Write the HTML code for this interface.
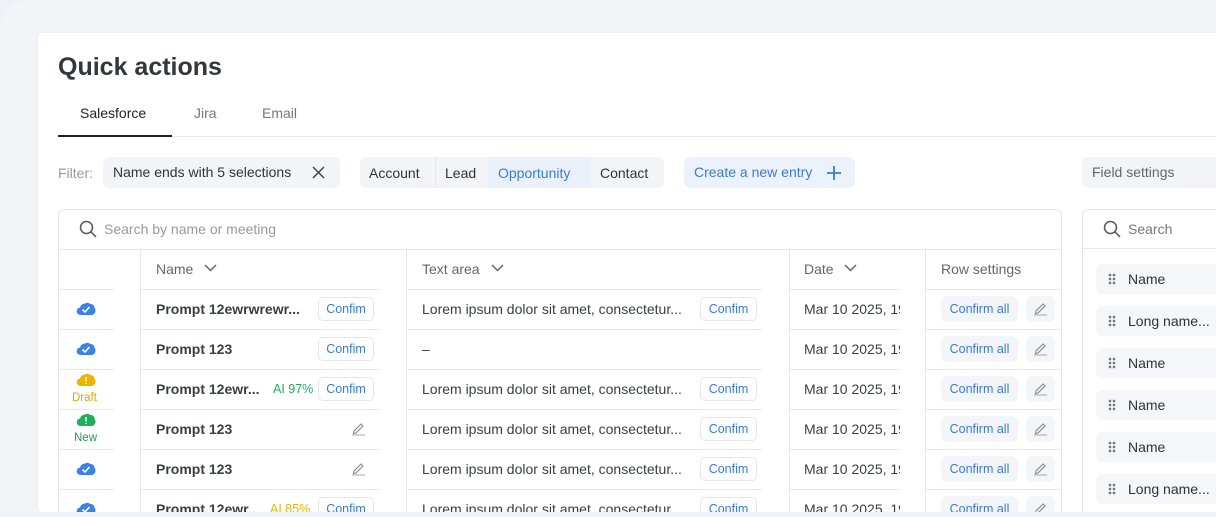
<!DOCTYPE html>
<html><head><meta charset="utf-8"><style>
*{box-sizing:border-box;margin:0;padding:0}
html,body{width:1216px;height:517px;overflow:hidden}
body{background:#eef1f6;font-family:"Liberation Sans",sans-serif;position:relative;color:#2f3237}
#w{position:absolute;left:0;top:0;width:1216px;height:517px;overflow:hidden}
.a{position:absolute}
.panel{left:0;top:0;width:1300px;height:517px;background:#f2f4f8;border-radius:30px 30px 0 0}
.card{left:38px;top:33px;width:1200px;height:479px;background:#fff;border-radius:4px 0 0 4px;box-shadow:0 0 6px rgba(0,0,0,.04)}
.t{white-space:nowrap;font-size:14px}
.chip{background:#f2f4f7;border-radius:6px;height:31px;top:157px;font-size:14px;line-height:31px;white-space:nowrap}
.hl{height:1px;background:#e6e8ec}
.vl{width:1px;background:#e6e8ec}
.btn{height:24px;border:1px solid #e3e6ea;border-radius:5px;color:#3a7bd5;font-size:12.5px;line-height:22px;text-align:center;background:#fff}
.ca{height:26px;background:#f3f5f8;border-radius:6px;color:#3a7bd5;font-size:12.5px;line-height:26px;text-align:center;width:77px;left:941px}
.pb{width:29px;height:26px;background:#f3f5f8;border-radius:6px;left:1026px}
.nm{font-weight:bold;font-size:14px;color:#3a3d42;left:156px;white-space:nowrap}
.ta{left:422px;font-size:14px;color:#3a3d42;white-space:nowrap}
.dt{left:804px;width:96px;overflow:hidden;font-size:14px;color:#3a3d42;white-space:nowrap}
.fs{left:1096px;width:140px;height:30px;background:#f4f6f9;border-radius:6px;font-size:14px;line-height:30px;padding-left:32px;color:#2f3237}
.dots{position:absolute;left:12px;top:9px;width:8px;height:12px;background:radial-gradient(circle,#777 1.2px,transparent 1.5px) 0 0/4px 4px}
</style></head><body><div id="w">
<div class="a panel"></div>
<div class="a card"></div>
<div class="a" style="left:58px;top:53px;font-size:25px;font-weight:bold;color:#33363c">Quick actions</div>
<div class="a t" style="left:80px;top:105px;color:#222">Salesforce</div>
<div class="a t" style="left:194px;top:105px;color:#777">Jira</div>
<div class="a t" style="left:262px;top:105px;color:#777">Email</div>
<div class="a hl" style="left:58px;top:136px;width:1170px"></div>
<div class="a" style="left:58px;top:135px;width:114px;height:2px;background:#222"></div>

<div class="a t" style="left:58px;top:165px;color:#999">Filter:</div>
<div class="a chip" style="left:103px;width:237px;padding-left:10px;color:#333">Name ends with 5 selections
<svg class="a" style="left:209px;top:9px" width="13" height="13" viewBox="0 0 13 13"><path d="M1 1L12 12M12 1L1 12" stroke="#444" stroke-width="1.5"/></svg></div>
<div class="a chip" style="left:360px;width:304px"></div>
<div class="a t" style="left:369px;top:165px;color:#333">Account</div>
<div class="a vl" style="left:435px;top:157px;height:31px;background:#e4e7eb"></div>
<div class="a t" style="left:445px;top:165px;color:#333">Lead</div>
<div class="a" style="left:488px;top:157px;width:103px;height:31px;background:#ebf1fb"></div>
<div class="a t" style="left:498px;top:165px;color:#3a7bd5">Opportunity</div>
<div class="a t" style="left:600px;top:165px;color:#333">Contact</div>
<div class="a chip" style="left:684px;width:171px;background:#ecf2fc;color:#3a7bd5;padding-left:10px">Create a new entry
<svg class="a" style="left:143px;top:9px" width="14" height="14"><path d="M7 0V14M0 7H14" stroke="#3a7bd5" stroke-width="1.8"/></svg></div>
<div class="a chip" style="left:1082px;width:160px;padding-left:10px;color:#666">Field settings</div>

<div class="a" style="left:58px;top:209px;width:1004px;height:320px;border:1px solid #e3e6ea;border-radius:7px"></div>
<svg class="a" style="left:79px;top:220px" width="18" height="18" viewBox="0 0 18 18"><circle cx="7.5" cy="7.5" r="6" fill="none" stroke="#555" stroke-width="1.5"/><path d="M12 12L17 17" stroke="#555" stroke-width="1.5"/></svg>
<div class="a t" style="left:104px;top:221px;color:#999">Search by name or meeting</div>
<div class="a hl" style="left:59px;top:249px;width:1002px"></div>
<div class="a vl" style="left:140px;top:250px;height:270px"></div>
<div class="a vl" style="left:406px;top:250px;height:270px"></div>
<div class="a vl" style="left:789px;top:250px;height:270px"></div>
<div class="a vl" style="left:925px;top:250px;height:270px"></div>
<div class="a t" style="left:156px;top:261px;color:#666">Name</div>
<svg class="a" style="left:204px;top:264px" width="13" height="8"><path d="M1 1L6.5 6.5L12 1" fill="none" stroke="#666" stroke-width="1.5"/></svg>
<div class="a t" style="left:422px;top:261px;color:#666">Text area</div>
<svg class="a" style="left:491px;top:264px" width="13" height="8"><path d="M1 1L6.5 6.5L12 1" fill="none" stroke="#666" stroke-width="1.5"/></svg>
<div class="a t" style="left:804px;top:261px;color:#666">Date</div>
<svg class="a" style="left:844px;top:264px" width="13" height="8"><path d="M1 1L6.5 6.5L12 1" fill="none" stroke="#666" stroke-width="1.5"/></svg>
<div class="a t" style="left:941px;top:261px;color:#666">Row settings</div>

<div class="a hl" style="left:59px;top:289px;width:55px"></div><div class="a hl" style="left:141px;top:289px;width:239px"></div><div class="a hl" style="left:407px;top:289px;width:355px"></div><div class="a hl" style="left:790px;top:289px;width:110px"></div><div class="a hl" style="left:926px;top:289px;width:135px"></div>
<div class="a hl" style="left:59px;top:329px;width:55px"></div><div class="a hl" style="left:141px;top:329px;width:239px"></div><div class="a hl" style="left:407px;top:329px;width:355px"></div><div class="a hl" style="left:790px;top:329px;width:110px"></div><div class="a hl" style="left:926px;top:329px;width:135px"></div>
<div class="a hl" style="left:59px;top:369px;width:55px"></div><div class="a hl" style="left:141px;top:369px;width:239px"></div><div class="a hl" style="left:407px;top:369px;width:355px"></div><div class="a hl" style="left:790px;top:369px;width:110px"></div><div class="a hl" style="left:926px;top:369px;width:135px"></div>
<div class="a hl" style="left:59px;top:409px;width:55px"></div><div class="a hl" style="left:141px;top:409px;width:239px"></div><div class="a hl" style="left:407px;top:409px;width:355px"></div><div class="a hl" style="left:790px;top:409px;width:110px"></div><div class="a hl" style="left:926px;top:409px;width:135px"></div>
<div class="a hl" style="left:59px;top:449px;width:55px"></div><div class="a hl" style="left:141px;top:449px;width:239px"></div><div class="a hl" style="left:407px;top:449px;width:355px"></div><div class="a hl" style="left:790px;top:449px;width:110px"></div><div class="a hl" style="left:926px;top:449px;width:135px"></div>
<div class="a hl" style="left:59px;top:489px;width:55px"></div><div class="a hl" style="left:141px;top:489px;width:239px"></div><div class="a hl" style="left:407px;top:489px;width:355px"></div><div class="a hl" style="left:790px;top:489px;width:110px"></div><div class="a hl" style="left:926px;top:489px;width:135px"></div>

<svg width="0" height="0" style="position:absolute"><defs><symbol id="cl" viewBox="0 0 20 14"><path d="M5 13C2 13 0.5 11 0.8 8.6C1.1 6.6 2.6 5.6 4 5.6C4.6 3 6.6 1.6 8.6 1.8C10 0.5 12.6 0.4 14 2C16.6 1.8 18.6 3.6 18.6 6C19.8 7 19.8 10 18.6 11.2C17.6 12.6 16.4 13 15 13Z"/></symbol></defs></svg>
<svg class="a" style="left:76px;top:302px" width="20" height="14" fill="#3b82e6"><use href="#cl"/><path d="M6.5 7.5L9 10L13.5 5" stroke="#fff" stroke-width="1.6" fill="none"/></svg>
<svg class="a" style="left:76px;top:342px" width="20" height="14" fill="#3b82e6"><use href="#cl"/><path d="M6.5 7.5L9 10L13.5 5" stroke="#fff" stroke-width="1.6" fill="none"/></svg>
<svg class="a" style="left:76px;top:373px" width="20" height="14" fill="#f0b400"><use href="#cl"/><path d="M10 4V8.5M10 10V11" stroke="#fff" stroke-width="1.6"/></svg>
<div class="a" style="left:72px;top:392px;font-size:11.5px;color:#e0a800">Draft</div>
<svg class="a" style="left:76px;top:413px" width="20" height="14" fill="#1db05a"><use href="#cl"/><path d="M10 4V8.5M10 10V11" stroke="#fff" stroke-width="1.6"/></svg>
<div class="a" style="left:74px;top:432px;font-size:11.5px;color:#1aa356">New</div>
<svg class="a" style="left:76px;top:462px" width="20" height="14" fill="#3b82e6"><use href="#cl"/><path d="M6.5 7.5L9 10L13.5 5" stroke="#fff" stroke-width="1.6" fill="none"/></svg>
<svg class="a" style="left:76px;top:502px" width="20" height="14" fill="#3b82e6"><use href="#cl"/><path d="M6.5 7.5L9 10L13.5 5" stroke="#fff" stroke-width="1.6" fill="none"/></svg>

<div class="a nm" style="top:301px">Prompt 12ewrwrewr...</div><div class="a btn" style="left:318px;top:297px;width:56px">Confim</div>
<div class="a nm" style="top:341px">Prompt 123</div><div class="a btn" style="left:318px;top:337px;width:56px">Confim</div>
<div class="a nm" style="top:381px">Prompt 12ewr...</div><div class="a" style="left:273px;top:382px;font-size:12.5px;color:#1db05a">AI 97%</div><div class="a btn" style="left:318px;top:377px;width:56px">Confim</div>
<div class="a nm" style="top:421px">Prompt 123</div>
<div class="a nm" style="top:461px">Prompt 123</div>
<div class="a nm" style="top:501px">Prompt 12ewr...</div><div class="a" style="left:270px;top:502px;font-size:12.5px;color:#e6b800">AI 85%</div><div class="a btn" style="left:318px;top:497px;width:56px">Confim</div>
<svg class="a" style="left:351px;top:421px" width="15" height="15"><path d="M3 10L10 3L12 5L5 12L2.5 12.5Z" fill="none" stroke="#888" stroke-width="1.1"/><path d="M1 14H14" stroke="#aaa"/></svg>
<svg class="a" style="left:351px;top:461px" width="15" height="15"><path d="M3 10L10 3L12 5L5 12L2.5 12.5Z" fill="none" stroke="#888" stroke-width="1.1"/><path d="M1 14H14" stroke="#aaa"/></svg>

<div class="a ta" style="top:301px">Lorem ipsum dolor sit amet, consectetur...</div><div class="a btn" style="left:700px;top:297px;width:57px">Confim</div>
<div class="a ta" style="top:341px">–</div>
<div class="a ta" style="top:381px">Lorem ipsum dolor sit amet, consectetur...</div><div class="a btn" style="left:700px;top:377px;width:57px">Confim</div>
<div class="a ta" style="top:421px">Lorem ipsum dolor sit amet, consectetur...</div><div class="a btn" style="left:700px;top:417px;width:57px">Confim</div>
<div class="a ta" style="top:461px">Lorem ipsum dolor sit amet, consectetur...</div><div class="a btn" style="left:700px;top:457px;width:57px">Confim</div>
<div class="a ta" style="top:501px">Lorem ipsum dolor sit amet, consectetur...</div><div class="a btn" style="left:700px;top:497px;width:57px">Confim</div>

<div class="a dt" style="top:301px">Mar 10 2025, 19:00</div>
<div class="a dt" style="top:341px">Mar 10 2025, 19:00</div>
<div class="a dt" style="top:381px">Mar 10 2025, 19:00</div>
<div class="a dt" style="top:421px">Mar 10 2025, 19:00</div>
<div class="a dt" style="top:461px">Mar 10 2025, 19:00</div>
<div class="a dt" style="top:501px">Mar 10 2025, 19:00</div>

<div class="a ca" style="top:296px">Confirm all</div><div class="a pb" style="top:296px"></div>
<div class="a ca" style="top:336px">Confirm all</div><div class="a pb" style="top:336px"></div>
<div class="a ca" style="top:376px">Confirm all</div><div class="a pb" style="top:376px"></div>
<div class="a ca" style="top:416px">Confirm all</div><div class="a pb" style="top:416px"></div>
<div class="a ca" style="top:456px">Confirm all</div><div class="a pb" style="top:456px"></div>
<div class="a ca" style="top:496px">Confirm all</div><div class="a pb" style="top:496px"></div>
<svg class="a" style="left:1033px;top:301px" width="15" height="15"><path d="M3 10L10 3L12 5L5 12L2.5 12.5Z" fill="none" stroke="#888" stroke-width="1.1"/><path d="M1 14H14" stroke="#aaa"/></svg>
<svg class="a" style="left:1033px;top:341px" width="15" height="15"><path d="M3 10L10 3L12 5L5 12L2.5 12.5Z" fill="none" stroke="#888" stroke-width="1.1"/><path d="M1 14H14" stroke="#aaa"/></svg>
<svg class="a" style="left:1033px;top:381px" width="15" height="15"><path d="M3 10L10 3L12 5L5 12L2.5 12.5Z" fill="none" stroke="#888" stroke-width="1.1"/><path d="M1 14H14" stroke="#aaa"/></svg>
<svg class="a" style="left:1033px;top:421px" width="15" height="15"><path d="M3 10L10 3L12 5L5 12L2.5 12.5Z" fill="none" stroke="#888" stroke-width="1.1"/><path d="M1 14H14" stroke="#aaa"/></svg>
<svg class="a" style="left:1033px;top:461px" width="15" height="15"><path d="M3 10L10 3L12 5L5 12L2.5 12.5Z" fill="none" stroke="#888" stroke-width="1.1"/><path d="M1 14H14" stroke="#aaa"/></svg>
<svg class="a" style="left:1033px;top:501px" width="15" height="15"><path d="M3 10L10 3L12 5L5 12L2.5 12.5Z" fill="none" stroke="#888" stroke-width="1.1"/><path d="M1 14H14" stroke="#aaa"/></svg>

<div class="a" style="left:1082px;top:209px;width:200px;height:320px;border:1px solid #e3e6ea;border-radius:7px"></div>
<svg class="a" style="left:1103px;top:220px" width="18" height="18" viewBox="0 0 18 18"><circle cx="7.5" cy="7.5" r="6" fill="none" stroke="#555" stroke-width="1.5"/><path d="M12 12L17 17" stroke="#555" stroke-width="1.5"/></svg>
<div class="a t" style="left:1128px;top:221px;color:#777">Search</div>
<div class="a hl" style="left:1083px;top:248px;width:140px"></div>
<div class="a fs" style="top:264px"><span class="dots"></span>Name</div>
<div class="a fs" style="top:306px"><span class="dots"></span>Long name...</div>
<div class="a fs" style="top:348px"><span class="dots"></span>Name</div>
<div class="a fs" style="top:390px"><span class="dots"></span>Name</div>
<div class="a fs" style="top:432px"><span class="dots"></span>Name</div>
<div class="a fs" style="top:474px"><span class="dots"></span>Long name...</div>
<div class="a" style="left:0;top:512px;width:1216px;height:5px;background:#eef1f6"></div>
</div></body></html>
